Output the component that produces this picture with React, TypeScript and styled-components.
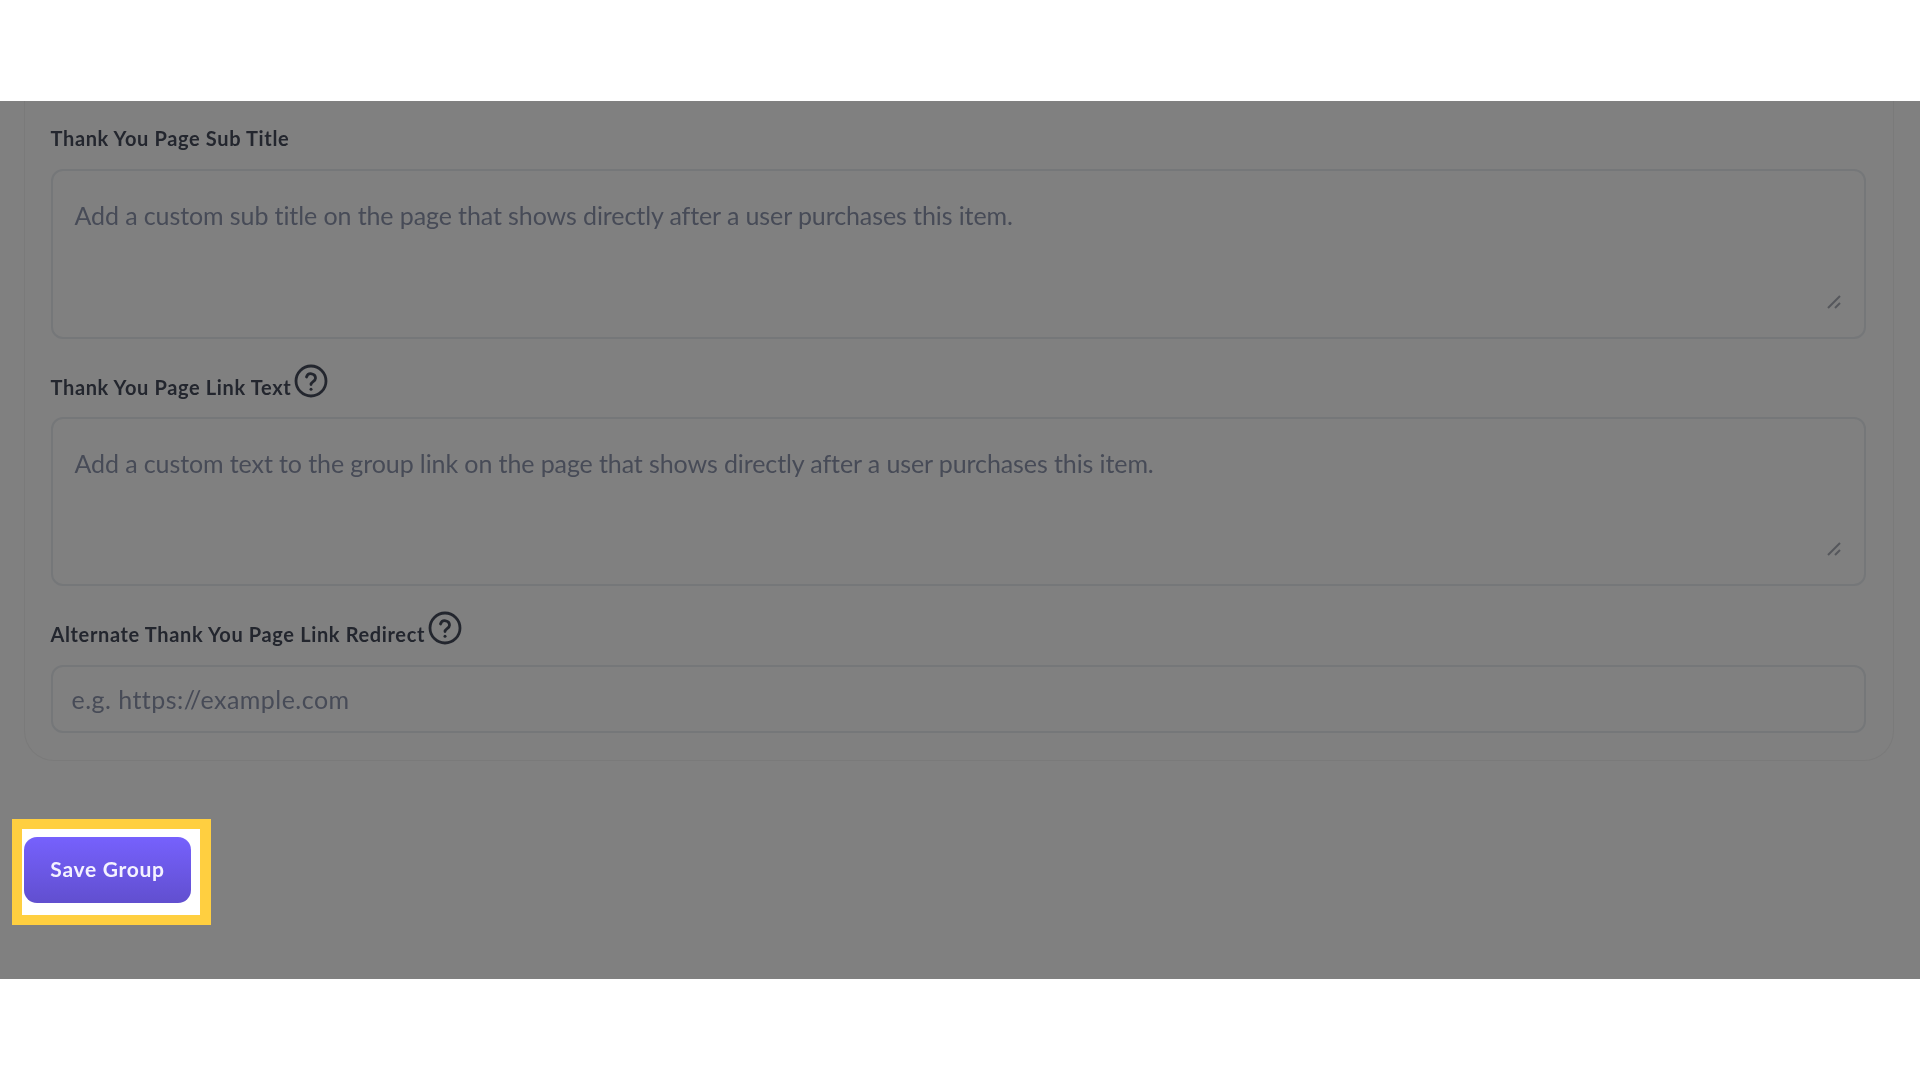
import React from "react";
import styled, { createGlobalStyle } from "styled-components";

const Global = createGlobalStyle`
  html, body { margin: 0; padding: 0; background: #fff; }
  body { font-family: Lato, "Liberation Sans", sans-serif; }
`;

const Page = styled.div`
  width: 1920px;
  height: 1080px;
  display: flex;
  flex-direction: column;
  overflow: hidden;
  background: #fff;
`;
const Dimmed = styled.main`
  margin-top: 101px;
  height: 878px;
  background: #808080;
  display: flex;
  flex-direction: column;
  align-items: flex-start;
`;
const Card = styled.section`
  box-sizing: border-box;
  width: 1870px;
  height: 660px;
  margin-left: 24px;
  padding: 25px 27px 0 25.5px;
  border: 1.5px solid #7a7a7a;
  border-top: 0;
  border-radius: 0 0 30px 30px;
  display: flex;
  flex-direction: column;
  filter: blur(0.7px);
`;
const Label = styled.div<{ $top: number; $bottom: number }>`
  display: flex;
  align-items: center;
  height: 24px;
  margin-top: ${(p) => p.$top}px;
  margin-bottom: ${(p) => p.$bottom}px;
  font-size: 20px;
  font-weight: 700;
  letter-spacing: 0.64px;
  color: #23262e;
  white-space: nowrap;
`;
const Help = styled.svg`
  width: 36px;
  height: 36px;
  margin: -12px 0 0 2px;
  flex: none;
`;
const Area = styled.div`
  position: relative;
  box-sizing: border-box;
  height: 169.5px;
  padding: 29px 22px 0;
  border: 2px solid #757779;
  border-radius: 12px;
  font-size: 25px;
  line-height: 30px;
  letter-spacing: -0.1px;
  color: #474b57;
  white-space: nowrap;
`;
const Grip = styled.svg`
  position: absolute;
  right: 23px;
  bottom: 28px;
  width: 14px;
  height: 14px;
`;
const Input = styled.div`
  box-sizing: border-box;
  height: 68px;
  padding: 0 19px;
  display: flex;
  align-items: center;
  border: 2px solid #757779;
  border-radius: 12px;
  font-size: 25px;
  letter-spacing: 0.46px;
  color: #474b57;
`;
const Frame = styled.div`
  box-sizing: border-box;
  width: 199px;
  height: 106px;
  margin: 58px 0 0 12px;
  padding: 8px 9px 12px 2px;
  border: solid #ffcf40;
  border-width: 10px 11px 10px 10px;
  background: #fff;
`;
const Button = styled.button`
  display: block;
  width: 100%;
  height: 100%;
  padding: 0 0 3px;
  border: 0;
  border-radius: 13px;
  background: linear-gradient(180deg, #7661fd, #614fcf);
  color: #f4f2ff;
  font: 700 21px Lato, "Liberation Sans", sans-serif;
  letter-spacing: 0.7px;
  filter: blur(0.7px);
`;

const HelpIcon = () => (
  <Help viewBox="0 0 36 36" fill="none" stroke="#23262e" strokeWidth="2.8" strokeLinecap="round">
    <circle cx="18" cy="18" r="15" />
    <path d="M13.5 14a4.6 4.6 0 0 1 9 1.3c0 3-4.5 3.6-4.5 6.2" />
    <path d="M18 26.2v.1" strokeWidth="3" />
  </Help>
);

const GripIcon = () => (
  <Grip viewBox="0 0 14 14" fill="none" stroke="#55575c" strokeWidth="2">
    <path d="M1 13 13 1" />
    <path d="M8 13l5-5" />
  </Grip>
);

export default function App() {
  return (
    <Page>
      <Global />
      <Dimmed>
        <Card>
          <Label $top={0} $bottom={19}>Thank You Page Sub Title</Label>
          <Area>
            Add a custom sub title on the page that shows directly after a user purchases this item.
            <GripIcon />
          </Area>
          <Label $top={36} $bottom={18}>
            Thank You Page Link Text
            <HelpIcon />
          </Label>
          <Area>
            Add a custom text to the group link on the page that shows directly after a user purchases this item.
            <GripIcon />
          </Area>
          <Label $top={36} $bottom={19}>
            Alternate Thank You Page Link Redirect
            <HelpIcon />
          </Label>
          <Input>e.g. https://example.com</Input>
        </Card>
        <Frame>
          <Button>Save Group</Button>
        </Frame>
      </Dimmed>
    </Page>
  );
}
